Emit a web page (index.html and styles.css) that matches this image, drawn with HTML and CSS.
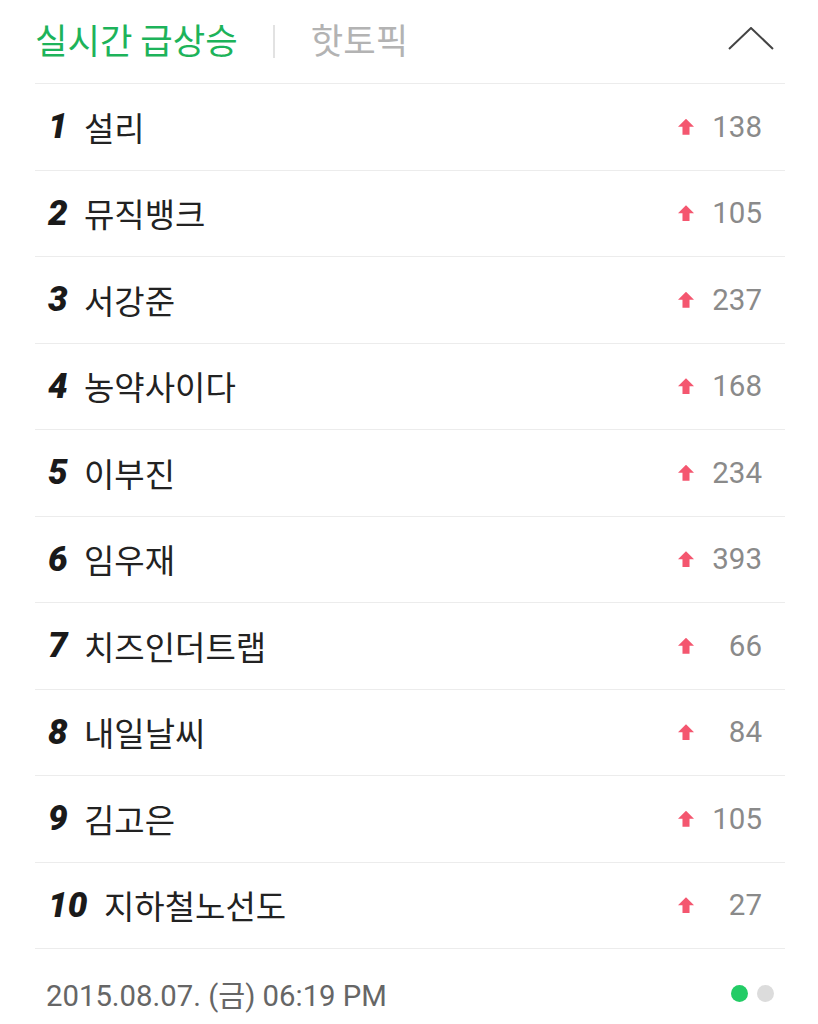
FILE: index.html
```html
<!DOCTYPE html>
<html>
<head>
    <title>실시간 급상승</title>
    <link rel="stylesheet" href="styles.css">
</head>
<body>
<div class="panel">

    <!-- Tabs -->
    <div class="tabs">
        <span class="tab active">실시간 급상승</span>
        <span class="bar"></span>
        <span class="tab">핫토픽</span>
        <svg class="fold" width="46" height="24" viewBox="0 0 46 24">
            <polyline points="1,22 23,1 45,22" fill="none" stroke="#444" stroke-width="2"/>
        </svg>
    </div>

    <!-- Ranking list -->
    <ul class="list">
        <li><span class="rank">1</span><span class="name">설리</span><span class="up"></span><span class="count">138</span></li>
        <li><span class="rank">2</span><span class="name">뮤직뱅크</span><span class="up"></span><span class="count">105</span></li>
        <li><span class="rank">3</span><span class="name">서강준</span><span class="up"></span><span class="count">237</span></li>
        <li><span class="rank">4</span><span class="name">농약사이다</span><span class="up"></span><span class="count">168</span></li>
        <li><span class="rank">5</span><span class="name">이부진</span><span class="up"></span><span class="count">234</span></li>
        <li><span class="rank">6</span><span class="name">임우재</span><span class="up"></span><span class="count">393</span></li>
        <li><span class="rank">7</span><span class="name">치즈인더트랩</span><span class="up"></span><span class="count">66</span></li>
        <li><span class="rank">8</span><span class="name">내일날씨</span><span class="up"></span><span class="count">84</span></li>
        <li><span class="rank">9</span><span class="name">김고은</span><span class="up"></span><span class="count">105</span></li>
        <li><span class="rank">10</span><span class="name">지하철노선도</span><span class="up"></span><span class="count">27</span></li>
    </ul>

    <!-- Footer -->
    <div class="foot">
        <span class="date">2015.08.07. (금) 06:19 PM</span>
        <span class="dots"><i class="dot on"></i><i class="dot"></i></span>
    </div>
</div>
</body>
</html>
```

FILE: styles.css
```css
body {
    margin: 0;
    background: #fff;
    font-family: Roboto, "Noto Sans CJK KR", sans-serif;
}

.panel {
    width: 750px;
    margin-left: 35px;
}

.tabs {
    display: flex;
    align-items: center;
    height: 83px;
    border-bottom: 1px solid #ececec;
}

.tab {
    font-family: "Noto Sans CJK KR", sans-serif;
    font-size: 35.3px;
    color: #b3b3b3;
    margin-top: -6px;
}

.tab.active {
    color: #1db35a;
}

.bar {
    width: 2px;
    height: 33px;
    background: #e2e2e2;
    margin: 0 36px 0 35px;
}

.fold {
    margin-left: auto;
    margin-right: 11px;
    margin-top: -6px;
}

.list {
    list-style: none;
    margin: 0;
    padding: 0;
}

.list li {
    display: flex;
    align-items: center;
    height: 85.5px;
    border-bottom: 1px solid #ececec;
}

.rank {
    width: 36px;
    padding-left: 13px;
    font-family: Roboto, sans-serif;
    font-weight: 900;
    font-style: italic;
    font-size: 35px;
    color: #1a1a1a;
}

.list li:last-child .rank {
    width: 56px;
}

.name {
    font-family: "Noto Sans CJK KR", sans-serif;
    font-size: 33px;
    color: #222;
    flex: 1;
}

.up {
    width: 16px;
    height: 16px;
    background: #f4566f;
    clip-path: polygon(50% 0, 100% 50%, 72% 50%, 72% 100%, 28% 100%, 28% 50%, 0 50%);
}

.count {
    width: 68px;
    margin-right: 23px;
    text-align: right;
    font-size: 29.5px;
    color: #8a8a8a;
}

.foot {
    display: flex;
    align-items: center;
    height: 88px;
}

.date {
    padding-left: 11px;
    font-family: Roboto, "Noto Sans CJK KR", sans-serif;
    font-size: 29.3px;
    color: #666;
}

.dots {
    margin-left: auto;
    margin-right: 11px;
    display: flex;
    gap: 9px;
}

.dot {
    width: 17px;
    height: 17px;
    border-radius: 50%;
    background: #dcdcdc;
}

.dot.on {
    background: #23cc66;
}
```
